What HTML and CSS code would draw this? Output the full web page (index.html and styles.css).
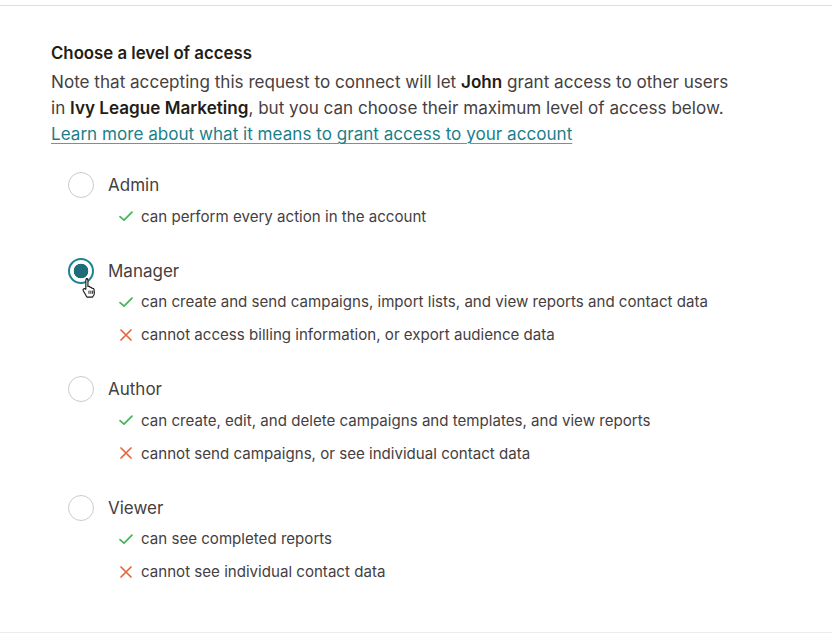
FILE: index.html
```html
<!DOCTYPE html>
<html lang="en">
<head>
<meta charset="utf-8">
<title>Choose a level of access</title>
<link rel="stylesheet" href="styles.css">
</head>
<body>
<div class="page">
  <section class="panel">
    <h2 class="title">Choose a level of access</h2>
    <p class="note">Note that accepting this request to connect will let <b>John</b> grant access to other users<br>in <b>Ivy League Marketing</b>, but you can choose their maximum level of access below.<br><a class="link" href="#">Learn more about what it means to grant access to your account</a></p>

    <ul class="options">
      <li class="option">
        <div class="option-head"><span class="radio"></span><span class="label">Admin</span></div>
        <ul class="perms">
          <li class="perm"><svg class="ico" viewBox="0 0 16 16"><path d="M2 8.6 L6 12.2 L14 4.2" fill="none" stroke="#45b35a" stroke-width="1.7" stroke-linecap="round" stroke-linejoin="round"/></svg>can perform every action in the account</li>
        </ul>
      </li>
      <li class="option">
        <div class="option-head"><span class="radio checked"></span><span class="label">Manager</span>
          <svg class="cursor" viewBox="0 0 16 20"><path d="M5 1.5c.9 0 1.5.6 1.5 1.5v6l.4-.1c.9-.2 1.6.3 1.7 1 .8-.3 1.6.1 1.8.9.9-.3 1.8.2 1.9 1.1l.3 3.2c.1 1.6-.5 3-1.7 4H5.5L2.2 13.3c-.5-.7-.4-1.6.3-2 .6-.4 1.4-.2 1.9.3l.1.1V3c0-.9.6-1.5 1.5-1.5z" fill="#fff" stroke="#1a1a1a" stroke-width="1.1" stroke-linejoin="round"/><path d="M7.5 13v3M9.3 13v3M11 13v3" stroke="#1a1a1a" stroke-width=".9"/></svg>
        </div>
        <ul class="perms">
          <li class="perm"><svg class="ico" viewBox="0 0 16 16"><path d="M2 8.6 L6 12.2 L14 4.2" fill="none" stroke="#45b35a" stroke-width="1.7" stroke-linecap="round" stroke-linejoin="round"/></svg>can create and send campaigns, import lists, and view reports and contact data</li>
          <li class="perm"><svg class="ico" viewBox="0 0 16 16"><path d="M3 3 L13 13 M13 3 L3 13" fill="none" stroke="#e8643a" stroke-width="1.7" stroke-linecap="round"/></svg>cannot access billing information, or export audience data</li>
        </ul>
      </li>
      <li class="option">
        <div class="option-head"><span class="radio"></span><span class="label">Author</span></div>
        <ul class="perms">
          <li class="perm"><svg class="ico" viewBox="0 0 16 16"><path d="M2 8.6 L6 12.2 L14 4.2" fill="none" stroke="#45b35a" stroke-width="1.7" stroke-linecap="round" stroke-linejoin="round"/></svg>can create, edit, and delete campaigns and templates, and view reports</li>
          <li class="perm"><svg class="ico" viewBox="0 0 16 16"><path d="M3 3 L13 13 M13 3 L3 13" fill="none" stroke="#e8643a" stroke-width="1.7" stroke-linecap="round"/></svg>cannot send campaigns, or see individual contact data</li>
        </ul>
      </li>
      <li class="option">
        <div class="option-head"><span class="radio"></span><span class="label">Viewer</span></div>
        <ul class="perms">
          <li class="perm"><svg class="ico" viewBox="0 0 16 16"><path d="M2 8.6 L6 12.2 L14 4.2" fill="none" stroke="#45b35a" stroke-width="1.7" stroke-linecap="round" stroke-linejoin="round"/></svg>can see completed reports</li>
          <li class="perm"><svg class="ico" viewBox="0 0 16 16"><path d="M3 3 L13 13 M13 3 L3 13" fill="none" stroke="#e8643a" stroke-width="1.7" stroke-linecap="round"/></svg>cannot see individual contact data</li>
        </ul>
      </li>
    </ul>
  </section>
</div>
</body>
</html>
```

FILE: styles.css
```css
* { box-sizing: border-box; }
html, body { margin: 0; padding: 0; background: #fff; }
body {
  font-family: Inter, "Liberation Sans", sans-serif;
  color: #403b3b;
  width: 832px;
  height: 640px;
  overflow: hidden;
}
.page {
  padding-top: 5px;
}
.panel {
  border-top: 1px solid #dedede;
  border-bottom: 1px solid #ececec;
  height: 628px;
  padding: 34px 0 0 51px;
}
.title {
  margin: 0;
  font-size: 16.8px;
  line-height: 26px;
  font-weight: 600;
  color: #241c15;
}
.note {
  margin: 3px 0 0;
  font-size: 17.1px;
  line-height: 26px;
  color: #45403f;
}
.note b { font-weight: 600; color: #241c15; }
.link {
  color: #1a7f8b;
  text-decoration: underline;
  text-decoration-color: #4aa3ad;
  text-underline-offset: 3px;
  text-decoration-thickness: 1px;
}
.options {
  list-style: none;
  margin: 25px 0 0;
  padding: 0 0 0 17px;
}
.option + .option { margin-top: 25px; }
.option-head {
  position: relative;
  display: flex;
  align-items: center;
  gap: 14px;
  height: 26px;
}
.radio {
  width: 26px;
  height: 26px;
  border-radius: 50%;
  border: 1.5px solid #cbcbcb;
  background: #fff;
  flex: none;
}
.radio.checked {
  border: 2px solid #1b8391;
  background: radial-gradient(circle, #1d6c78 0 7px, #fff 7.6px);
}
.label {
  font-size: 17px;
  color: #45403f;
}
.cursor {
  position: absolute;
  left: 13px;
  top: 19px;
  width: 17px;
  height: 21px;
}
.perms {
  list-style: none;
  margin: 1.5px 0 0;
  padding: 0 0 0 50px;
}
.perm {
  display: flex;
  align-items: center;
  height: 33px;
  font-size: 15.1px;
  color: #45403f;
}
.ico {
  width: 16px;
  height: 16px;
  margin-right: 7px;
  flex: none;
}
```
